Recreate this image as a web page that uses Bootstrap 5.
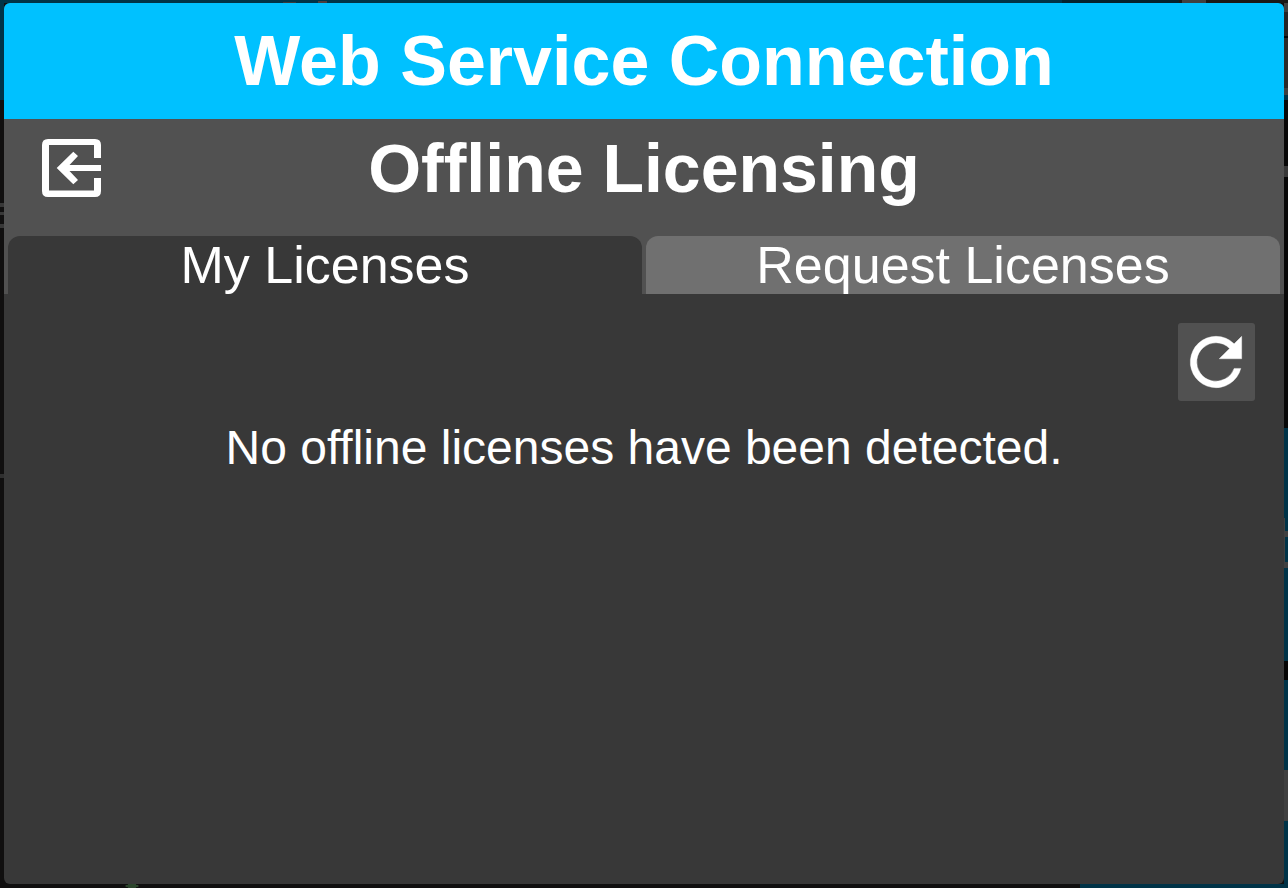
<!DOCTYPE html>
<html lang="en">
<head>
<meta charset="utf-8">
<meta name="viewport" content="width=device-width, initial-scale=1">
<title>Web Service Connection</title>
<link href="https://cdn.jsdelivr.net/npm/bootstrap@5.3.0/dist/css/bootstrap.min.css" rel="stylesheet">
<style>
  body {
    font-family: "Liberation Sans", Arial, sans-serif;
    color: #fff;
    /* dimmed application behind the dialog */
    background:
      radial-gradient(closest-side, #2c452c 90%, transparent) 125px 100% / 14px 4px no-repeat,
      linear-gradient(#4c3c3c, #4c3c3c) 318px 1px / 9px 2px no-repeat,
      linear-gradient(#3c3838, #3c3838) 283px 2px / 13px 1px no-repeat,
      linear-gradient(#383838 4px, transparent 4px 9px, #383838 9px 12px, transparent 12px 21px, #383838 21px) 0 203px / 4px 25px no-repeat,
      linear-gradient(#303030, #303030) 0 474px / 4px 4px no-repeat,
      linear-gradient(#383838, #383838) 100% 166px / 4px 11px no-repeat,
      linear-gradient(#404040 6px, transparent 6px 31px, #404040 31px) 100% 531px / 3px 37px no-repeat,
      linear-gradient(90deg, #404040 1px, transparent 1px) 100% 518px / 4px 50px no-repeat,
      linear-gradient(#404040, #404040) 1182px 0 / 24px 4px no-repeat,
      linear-gradient(90deg, #003347 1062px, #04222d 1062px 1179px, #1a1817 1179px) 0 0 / 100% 3px no-repeat,
      linear-gradient(#003347, #003347) 0 0 / 4px 100px no-repeat,
      linear-gradient(#003347, #003347) right bottom / 208px 4px no-repeat,
      linear-gradient(#404040 12px, #262525 12px 36px, #050505 36px 38px, #2b2a29 38px 88px, #404040 88px 95px, #003347 95px 100px, #080808 100px 428px, #003347 428px 661px, #050505 661px 680px, #003347 680px 770px, #404040 770px 821px, #003347 821px) right top / 4px 100% no-repeat,
      #100f0f;
  }
  .backdrop-pad { padding: 3px 4px 4px; }
  .dialog-panel { background: #383838; border-radius: 6px; overflow: hidden; }
  .title-bar { background: #00c1ff; height: 116px; }
  .title-bar h1 { font-size: 70px; line-height: 80px; }
  .sub-head { background: #515151; padding-bottom: 19px; }
  .sub-row { display: grid; grid-template-columns: 120px 1fr 120px; height: 98px; }
  .sub-row h2 { font-size: 68px; line-height: 80px; }
  .back-btn { margin-left: 38px; width: 59px; height: 58px; }
  .tab-row { background: #515151; gap: 4px; padding: 0 4px; }
  .tab-btn {
    height: 58px; font-size: 52px; line-height: 58px; color: #fff;
    background: #707070; border-radius: 12px 12px 0 0;
  }
  .tab-btn.active { background: #383838; }
  .pane { padding: 29px; }
  .reload-btn { width: 77px; height: 78px; background: #515151; border-radius: 3px; }
  .empty-note { font-size: 48px; line-height: 56px; margin-top: 19px; }
</style>
</head>
<body>
<div class="backdrop-pad min-vh-100 d-flex">
  <main class="dialog-panel flex-grow-1 d-flex flex-column">
    <header class="title-bar d-flex align-items-center justify-content-center">
      <h1 class="fw-bold m-0">Web Service Connection</h1>
    </header>
    <div class="sub-head">
      <div class="sub-row align-items-center">
        <button type="button" class="back-btn btn p-0 border-0 d-flex" aria-label="Back">
          <svg width="59" height="58" viewBox="0 0 59 58" fill="#fff" aria-hidden="true">
            <path d="M6 0H53Q59 0 59 6V19H52V6H7V51.500H52V39H59V52Q59 58 53 58H6Q0 58 0 52V6Q0 0 6 0Z"/>
            <path d="M14.700 29L31.300 12.700L36 17L27.500 26H59V32H27.500L36 41L31.300 45.300Z"/>
          </svg>
        </button>
        <h2 class="fw-bold m-0 text-center">Offline Licensing</h2>
      </div>
    </div>
    <div class="tab-row d-flex" role="tablist">
      <button type="button" id="tab-mine" class="tab-btn active flex-fill w-50 border-0 p-0" role="tab" aria-selected="true" aria-controls="pane-mine" data-bs-toggle="tab" data-bs-target="#pane-mine">My Licenses</button>
      <button type="button" id="tab-request" class="tab-btn flex-fill w-50 border-0 p-0" role="tab" aria-selected="false" aria-controls="pane-request" data-bs-toggle="tab" data-bs-target="#pane-request">Request Licenses</button>
    </div>
    <div class="tab-content flex-grow-1">
      <section id="pane-mine" class="pane tab-pane show active" role="tabpanel" aria-labelledby="tab-mine">
        <div class="d-flex justify-content-end">
          <button type="button" class="reload-btn btn p-0 border-0 d-flex justify-content-center" aria-label="Refresh">
            <svg width="77" height="78" viewBox="0.15 0 24 24" class="flex-shrink-0" fill="#fff" stroke="#fff" stroke-width=".12" aria-hidden="true">
              <path d="M17.650 6.350A7.960 7.960 0 0 0 12 4a8 8 0 1 0 7.730 10h-2.080A6 6 0 1 1 12 6c1.660 0 3.140.690 4.220 1.780L13 11h7V4l-2.350 2.350z"/>
            </svg>
          </button>
        </div>
        <p class="empty-note mb-0 text-center">No offline licenses have been detected.</p>
      </section>
      <section id="pane-request" class="pane tab-pane" role="tabpanel" aria-labelledby="tab-request"></section>
    </div>
  </main>
</div>
<script src="https://cdn.jsdelivr.net/npm/bootstrap@5.3.0/dist/js/bootstrap.bundle.min.js"></script>
</body>
</html>
